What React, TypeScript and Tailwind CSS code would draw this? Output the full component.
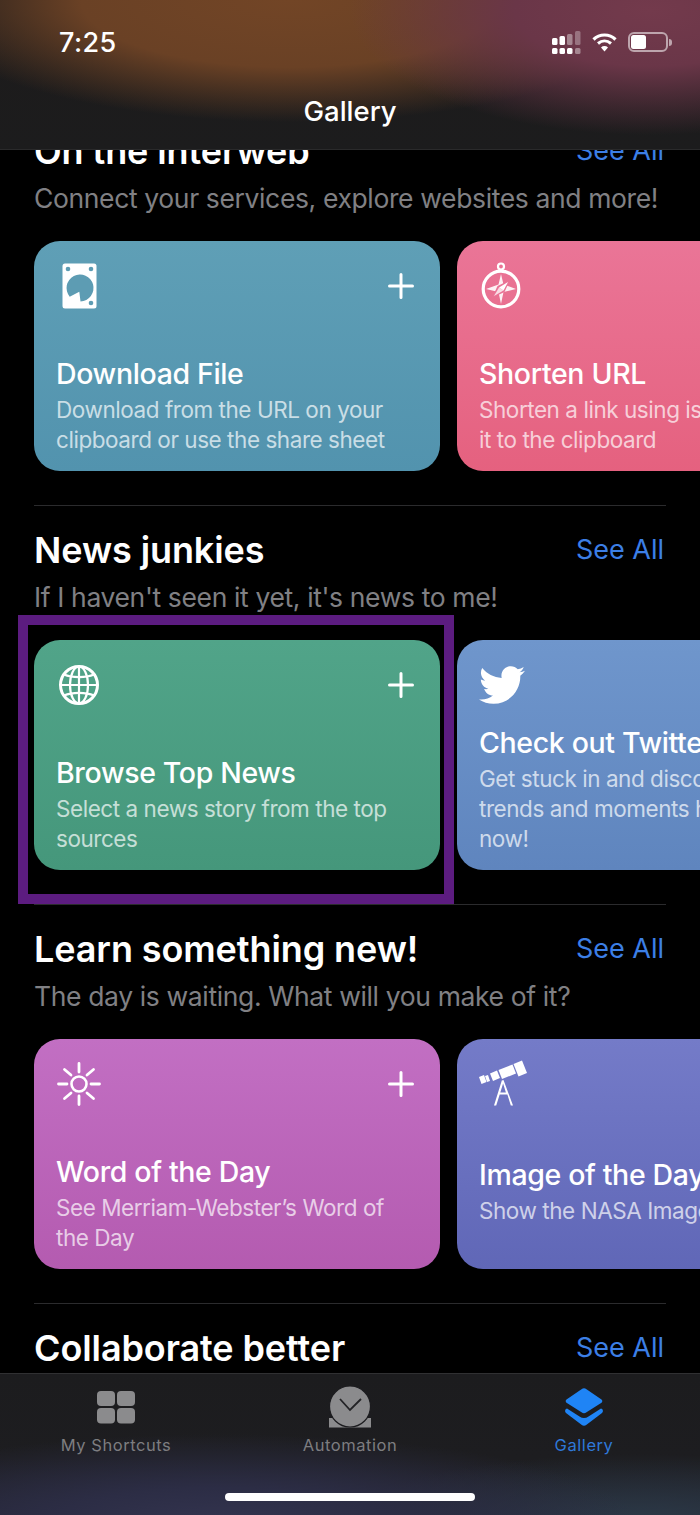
import React from "react";
import { FaTwitter } from "react-icons/fa";

const font = "font-['Inter','Liberation_Sans',sans-serif]";

function Plus() {
  return (
    <svg width="26" height="26" viewBox="0 0 26 26" className="shrink-0">
      <path d="M13 1.500v23M1.500 13h23" stroke="#fff" strokeWidth="3" strokeLinecap="round" />
    </svg>
  );
}

function Disk() {
  return (
    <svg width="46" height="46" viewBox="0 0 46 46">
      <rect x="6.500" y="0.500" width="34" height="45" rx="2.500" fill="#fff" />
      <circle cx="12" cy="6" r="2.300" fill="#5d9cb3" />
      <circle cx="35" cy="6" r="2.300" fill="#5d9cb3" />
      <circle cx="35" cy="40" r="2.300" fill="#5d9cb3" />
      <path d="M23.300 28.700L13.700 33.700A13.500 13.500 0 1 1 24.500 38.500Z" fill="#5d9cb3" />
    </svg>
  );
}

function Compass() {
  return (
    <svg width="44" height="48" viewBox="0 0 44 48" fill="none">
      <circle cx="22" cy="4.500" r="3" stroke="#fff" strokeWidth="2.200" />
      <circle cx="22" cy="27" r="17.800" stroke="#fff" strokeWidth="3.200" />
      <path d="M22 12l2.500 10.500L37 27l-12.500 3L22 42l-2.500-12L7 27l12.500-4.500z" fill="#fff" opacity="0.9" />
      <path d="M31 18L18.500 24 13 36l12.500-6z" fill="#ea7396" />
      <path d="M29 20l-9 5.500 4.500 3z" fill="#fff" />
      <path d="M15 34l5-8.500 4.500 3z" fill="#fff" opacity="0.75" />
    </svg>
  );
}

function Globe() {
  return (
    <svg width="46" height="46" viewBox="0 0 46 46" fill="none" stroke="#fff">
      <circle cx="23" cy="23" r="18.500" strokeWidth="3" />
      <ellipse cx="23" cy="23" rx="9" ry="18.500" strokeWidth="2.200" />
      <path d="M23 4.500v37M4.500 23h37" strokeWidth="2.200" />
      <path d="M8 12.500c8 3.500 22 3.500 30 0M8 33.500c8-3.500 22-3.500 30 0" strokeWidth="2.200" />
    </svg>
  );
}

function Sun() {
  return (
    <svg width="46" height="46" viewBox="0 0 46 46" fill="none" stroke="#fff" strokeLinecap="round">
      <circle cx="23" cy="23" r="7.500" strokeWidth="2.600" />
      <path d="M23 2.500v8.500M23 35v8.500M2.500 23h8.500M35 23h8.500M8.500 8.500l6.500 5.500M37.500 8.500L31 14M8.500 37.500L15 32M37.500 37.500L31 32" strokeWidth="2.800" />
    </svg>
  );
}

function Telescope() {
  return (
    <svg width="50" height="48" viewBox="0 0 50 48" fill="#fff">
      <path d="M0 17l5-2 2.500 7-5 2z" />
      <path d="M6 16l3-1 2 6-3 1z" />
      <path d="M11 13.500l7-3 3 7.500-7 3z" />
      <path d="M19.500 10l14-5.500 3.500 9-14 5.500z" />
      <path d="M34.500 4l8.500-3.500 5 12.500-8.500 3.500z" />
      <path d="M24.500 20l-1.700 0.600L15 45.500h2.200l3.500-11h7.700l3.400 11H34z M21.300 32.500l2.800-9 2.800 9z" />
    </svg>
  );
}

function Card({
  w = "w-[406px]",
  bg,
  icon,
  plus,
  title,
  lines,
  pb = "pb-[16px]",
}: {
  w?: string;
  bg: string;
  icon: React.ReactNode;
  plus?: boolean;
  title: string;
  lines: string[];
  pb?: string;
}) {
  return (
    <div className={`${w} ${bg} ${pb} h-[230px] shrink-0 rounded-[26px] pl-[22px] pr-[13px] pt-[22px] flex flex-col justify-between overflow-hidden`}>
      <div className="flex items-center justify-between h-[46px] pr-[13px]">
        {icon}
        {plus && <Plus />}
      </div>
      <div className="whitespace-nowrap">
        <div className="mb-[3px] text-[28.500px] leading-[36px] font-medium text-white tracking-[-0.35px]">{title}</div>
        {lines.map((l) => (
          <div key={l} className="text-[22.500px] leading-[30px] text-white/70 tracking-[-0.45px]">{l}</div>
        ))}
      </div>
    </div>
  );
}

function Section({
  title,
  sub,
  children,
  border = true,
}: {
  title: string;
  sub: string;
  children?: React.ReactNode;
  border?: boolean;
}) {
  return (
    <section className="mx-[34px]">
      <div className={`pt-[22px] ${border ? "border-t border-[#2b2b2d]" : "border-t border-transparent"}`}>
        <div className="flex items-center justify-between h-[44px]">
          <h2 className="text-[36px] leading-[44px] font-semibold text-white tracking-[-0.1px]">{title}</h2>
          <a className="text-[27px] leading-[34px] text-[#3c7fe6] pr-[2px]">See All</a>
        </div>
        <p className="mt-[8px] h-[34px] text-[26.500px] leading-[34px] text-[#808084] tracking-[-0.37px] whitespace-nowrap">{sub}</p>
      </div>
      {children && <div className="mt-[26px] mb-[34px] flex gap-[17px] w-[700px]">{children}</div>}
    </section>
  );
}

function GridIcon() {
  return (
    <svg width="38" height="33" viewBox="0 0 38 33" fill="#8b8b8d">
      <rect x="0" y="0" width="18" height="15" rx="4" />
      <rect x="20" y="0" width="18" height="15" rx="4" />
      <rect x="0" y="17" width="18" height="15.500" rx="4" />
      <rect x="20" y="17" width="18" height="15.500" rx="4" />
    </svg>
  );
}

function ClockIcon() {
  return (
    <svg width="42" height="42" viewBox="0 0 42 42">
      <rect x="0" y="32" width="42" height="9.500" fill="#8b8b8d" />
      <path d="M0 32h42v-6H0z" fill="#1c1c1f" />
      <circle cx="21" cy="20.500" r="20.500" fill="#8b8b8d" stroke="#1c1c1f" strokeWidth="1.200" />
      <path d="M11 13l10 11 11-11" fill="none" stroke="#232326" strokeWidth="1.800" />
    </svg>
  );
}

function LayersIcon() {
  return (
    <svg width="40" height="38" viewBox="0 0 40 38" fill="#1f84f5">
      <path d="M17.500 1.200a4 4 0 0 1 5 0l15 10.300a2 2 0 0 1 0 3.200l-15 9.600a4 4 0 0 1-5 0l-15-9.600a2 2 0 0 1 0-3.200z" />
      <path d="M3 20.500l12.500 8a8 8 0 0 0 9 0l12.500-8 1 0.600a2.400 2.400 0 0 1 0 3.800l-15.500 11.800a4 4 0 0 1-5 0L2 24.900a2.400 2.400 0 0 1 0-3.800z" />
    </svg>
  );
}

function Tab({ icon, label, active }: { icon: React.ReactNode; label: string; active?: boolean }) {
  return (
    <div className="flex flex-col items-center">
      <div className="h-[46px] flex items-center justify-center">{icon}</div>
      <span className={`mt-[4px] text-[16.500px] leading-[22px] tracking-[0.55px] ${active ? "text-[#2f78d8]" : "text-[#7d7d80]"}`}>{label}</span>
    </div>
  );
}

export default function App() {
  return (
    <div className={`${font} relative w-[700px] h-[1515px] bg-black overflow-hidden flex flex-col`}>
      <header className="h-[150px] shrink-0 border-b border-[#2a2a2b] bg-[radial-gradient(ellipse_300px_125px_at_650px_10px,#733a4c_0%,#6a3648_45%,transparent_100%),radial-gradient(ellipse_380px_122px_at_290px_0px,#724526_0%,#6a4125_55%,transparent_100%),linear-gradient(to_bottom,#1d1b1b_0%,#1c1c1d_100%)]">
        <div className="flex items-center justify-between h-[84px] pl-[59px] pr-[28px]">
          <span className="text-[27px] font-medium text-white tracking-[0.4px] translate-y-[1px]">7:25</span>
          <div className="flex items-center">
            <svg width="29" height="23" viewBox="0 0 29 23" fill="#fff">
              <rect x="0" y="7" width="5.500" height="7" rx="1.500" />
              <rect x="7.500" y="5" width="5.500" height="9" rx="1.500" />
              <rect x="15" y="3" width="5.500" height="11" rx="1.500" opacity="0.4" />
              <rect x="23" y="0" width="5.500" height="14" rx="1.500" opacity="0.3" />
              <rect x="0" y="17" width="5.500" height="6" rx="1.500" />
              <rect x="7.500" y="17" width="5.500" height="6" rx="1.500" />
              <rect x="15" y="17" width="5.500" height="6" rx="1.500" />
              <rect x="23" y="17" width="5.500" height="6" rx="1.500" opacity="0.4" />
            </svg>
            <svg width="27" height="20" viewBox="0 0 26 20" fill="none" stroke="#fff" className="ml-[10px]">
              <path d="M2 7.500C8 1.500 18 1.500 24 7.500" strokeWidth="3.200" />
              <path d="M6.500 11.500C10.500 8 15.500 8 19.500 11.500" strokeWidth="3" />
              <path d="M13 19.500l-3.500-4a5 5 0 0 1 7 0z" fill="#fff" stroke="none" />
            </svg>
            <div className="ml-[10px] w-[40px] h-[20px] rounded-[6px] border-2 border-white/55 p-[1px] flex">
              <div className="w-[15px] rounded-[2.500px] bg-white" />
            </div>
            <div className="ml-[1px] w-[3px] h-[7px] rounded-r bg-white/55" />
          </div>
        </div>
        <div className="mt-[9px] text-center text-[27.500px] leading-[36px] font-medium text-white">Gallery</div>
      </header>

      <main className="flex-1 overflow-hidden">
        <div className="-mt-[44px]">
          <Section title="On the interweb" sub="Connect your services, explore websites and more!" border={false}>
            <Card bg="bg-gradient-to-b from-[#5f9fb6] to-[#5293ae]" icon={<Disk />} plus title="Download File" lines={["Download from the URL on your", "clipboard or use the share sheet"]} />
            <Card bg="bg-gradient-to-b from-[#ea7597] to-[#e5617f]" icon={<Compass />} title="Shorten URL" lines={["Shorten a link using is.gd and copy", "it to the clipboard"]} />
          </Section>
          <Section title="News junkies" sub="If I haven't seen it yet, it's news to me!">
            <Card bg="bg-gradient-to-b from-[#51a489] to-[#45977b]" icon={<Globe />} plus title="Browse Top News" lines={["Select a news story from the top", "sources"]} />
            <Card bg="bg-gradient-to-b from-[#6f96cc] to-[#5f85be]" icon={<FaTwitter size={46} color="#fff" />} title="Check out Twitter" lines={["Get stuck in and discover the latest", "trends and moments happening right", "now!"]} />
          </Section>
          <Section title="Learn something new!" sub="The day is waiting. What will you make of it?">
            <Card bg="bg-gradient-to-b from-[#c26fc3] to-[#b45bb0]" icon={<Sun />} plus title="Word of the Day" lines={["See Merriam-Webster’s Word of", "the Day"]} />
            <Card bg="bg-gradient-to-b from-[#747bc8] to-[#6067b7]" icon={<Telescope />} title="Image of the Day" pb="pb-[43px]" lines={["Show the NASA Image of the Day"]} />
          </Section>
          <Section title="Collaborate better" sub="" />
        </div>
      </main>

      <nav className="relative h-[142px] shrink-0 border-t border-[#303032] bg-[radial-gradient(ellipse_420px_90px_at_220px_150px,#33344f_0%,#2c2d45_40%,transparent_100%),radial-gradient(ellipse_300px_70px_at_640px_150px,#2c3a48_0%,transparent_100%),linear-gradient(to_bottom,#1c1c1e_0%,#1d1d20_60%,#232430_100%)]">
        <div className="grid grid-cols-[232px_236px_232px] pt-[10px]">
          <Tab icon={<GridIcon />} label="My Shortcuts" />
          <Tab icon={<ClockIcon />} label="Automation" />
          <Tab icon={<LayersIcon />} label="Gallery" active />
        </div>
        <div className="absolute left-[225px] bottom-[14px] w-[250px] h-[8px] rounded-full bg-white" />
      </nav>

      <div className="absolute left-[18px] top-[615px] w-[436px] h-[289px] border-[10px] border-[#5c1c80] pointer-events-none" />
    </div>
  );
}
